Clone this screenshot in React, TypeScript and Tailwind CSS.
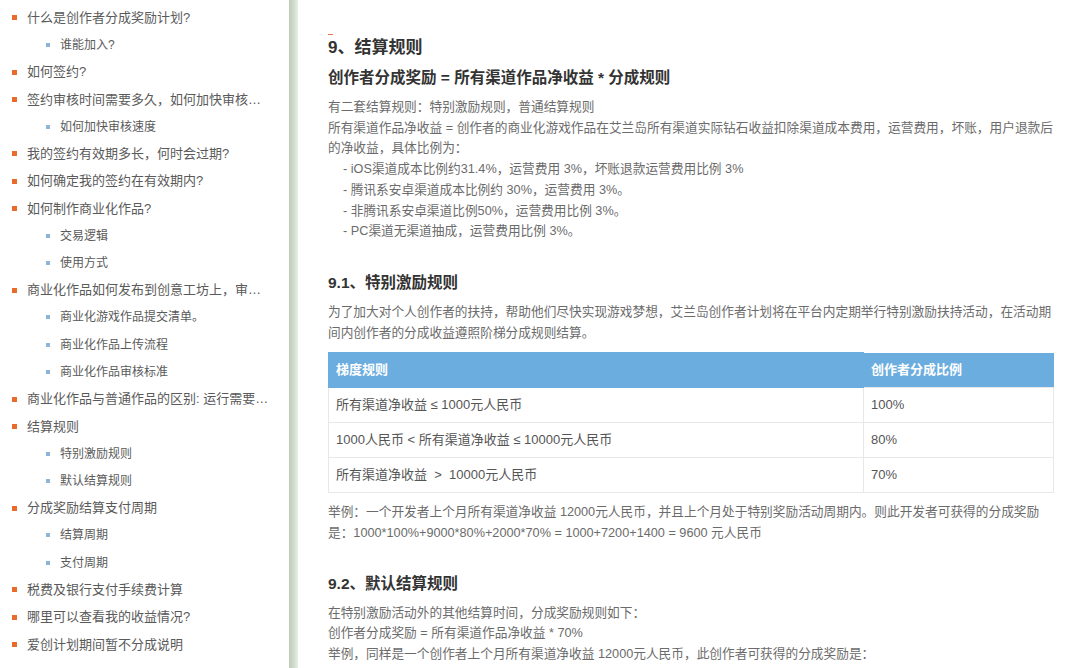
const font = { fontFamily: '"Liberation Sans", "Noto Sans CJK SC", sans-serif' };

type NavItem = { label: string; sub?: boolean };

const nav: NavItem[] = [
  { label: "什么是创作者分成奖励计划?" },
  { label: "谁能加入?", sub: true },
  { label: "如何签约?" },
  { label: "签约审核时间需要多久，如何加快审核速度?" },
  { label: "如何加快审核速度", sub: true },
  { label: "我的签约有效期多长，何时会过期?" },
  { label: "如何确定我的签约在有效期内?" },
  { label: "如何制作商业化作品?" },
  { label: "交易逻辑", sub: true },
  { label: "使用方式", sub: true },
  { label: "商业化作品如何发布到创意工坊上，审核需要多久?" },
  { label: "商业化游戏作品提交清单。", sub: true },
  { label: "商业化作品上传流程", sub: true },
  { label: "商业化作品审核标准", sub: true },
  { label: "商业化作品与普通作品的区别: 运行需要注意什么" },
  { label: "结算规则" },
  { label: "特别激励规则", sub: true },
  { label: "默认结算规则", sub: true },
  { label: "分成奖励结算支付周期" },
  { label: "结算周期", sub: true },
  { label: "支付周期", sub: true },
  { label: "税费及银行支付手续费计算" },
  { label: "哪里可以查看我的收益情况?" },
  { label: "爱创计划期间暂不分成说明" },
];

const tiers = [
  { rule: "所有渠道净收益 ≤ 1000元人民币", ratio: "100%" },
  { rule: "1000人民币 < 所有渠道净收益 ≤ 10000元人民币", ratio: "80%" },
  { rule: "所有渠道净收益  >  10000元人民币", ratio: "70%" },
];

function Sidebar() {
  return (
    <aside className="w-[289px] shrink-0 bg-white pt-[4px]">
      <ul>
        {nav.map((n) =>
          n.sub ? (
            <li key={n.label} className="flex items-center h-[27.25px] pl-[46px]">
              <span className="w-[4px] h-[4px] bg-[#8db3d5] shrink-0" />
              <span className="ml-[10px] text-[12px] text-[#5a5a5a]">{n.label}</span>
            </li>
          ) : (
            <li key={n.label} className="flex items-center h-[27.25px] pl-[12px]">
              <span className="w-[5px] h-[5px] bg-[#ea6a2c] shrink-0" />
              <span className="ml-[10px] w-[244px] truncate text-[13px] text-[#5a5a5a]">{n.label}</span>
            </li>
          )
        )}
      </ul>
    </aside>
  );
}

function Content() {
  return (
    <main className="flex-1 bg-white pl-[30px] pr-[26px] text-[12.7px] leading-[20.7px] text-[#6b6b6b]">
      <div className="mt-[34px] w-[5px] h-px bg-[#e8764a]" />
      <h2 className="text-[17px] leading-[26px] font-bold text-[#333]">9、结算规则</h2>
      <h3 className="mt-[4px] text-[15.5px] leading-[26px] font-bold text-[#333]">
        创作者分成奖励 = 所有渠道作品净收益 * 分成规则
      </h3>
      <div className="mt-[6px]">
        <p>有二套结算规则：特别激励规则，普通结算规则</p>
        <p>
          所有渠道作品净收益 = 创作者的商业化游戏作品在艾兰岛所有渠道实际钻石收益扣除渠道成本费用，运营费用，坏账，用户退款后的净收益，具体比例为：
        </p>
        <ul className="pl-[15px]">
          <li>- iOS渠道成本比例约31.4%，运营费用 3%，坏账退款运营费用比例 3%</li>
          <li>- 腾讯系安卓渠道成本比例约 30%，运营费用 3%。</li>
          <li>- 非腾讯系安卓渠道比例50%，运营费用比例 3%。</li>
          <li>- PC渠道无渠道抽成，运营费用比例 3%。</li>
        </ul>
      </div>

      <h3 className="mt-[29px] text-[15.5px] leading-[24px] font-bold text-[#333]">9.1、特别激励规则</h3>
      <p className="mt-[7px]">
        为了加大对个人创作者的扶持，帮助他们尽快实现游戏梦想，艾兰岛创作者计划将在平台内定期举行特别激励扶持活动，在活动期间内创作者的分成收益遵照阶梯分成规则结算。
      </p>
      <table className="mt-[9px] w-full border-collapse text-[13px] text-[#555]">
        <thead>
          <tr className="bg-[#6badde] text-white h-[35px]">
            <th className="w-[535px] text-left font-bold pl-[7px] border border-[#6badde]">梯度规则</th>
            <th className="text-left font-bold pl-[7px] border-l border-[#8cc0e6]">创作者分成比例</th>
          </tr>
        </thead>
        <tbody>
          {tiers.map((t) => (
            <tr key={t.ratio} className="h-[35px]">
              <td className="pl-[7px] border border-[#e8e8e8] whitespace-pre">{t.rule}</td>
              <td className="pl-[7px] border border-[#e8e8e8]">{t.ratio}</td>
            </tr>
          ))}
        </tbody>
      </table>
      <p className="mt-[9px]">
        举例：一个开发者上个月所有渠道净收益 12000元人民币，并且上个月处于特别奖励活动周期内。则此开发者可获得的分成奖励
        <br />
        是：1000*100%+9000*80%+2000*70% = 1000+7200+1400 = 9600 元人民币
      </p>

      <h3 className="mt-[28px] text-[15.5px] leading-[24px] font-bold text-[#333]">9.2、默认结算规则</h3>
      <div className="mt-[7px]">
        <p>在特别激励活动外的其他结算时间，分成奖励规则如下：</p>
        <p>创作者分成奖励 = 所有渠道作品净收益 * 70%</p>
        <p>举例，同样是一个创作者上个月所有渠道净收益 12000元人民币，此创作者可获得的分成奖励是：</p>
      </div>
    </main>
  );
}

export default function App() {
  return (
    <div className="flex h-[668px] w-[1080px] overflow-hidden bg-white" style={font}>
      <Sidebar />
      <div className="w-[9px] shrink-0 bg-gradient-to-r from-[#bccbb9] via-[#cfdacc] to-[#e9eee7]" />
      <Content />
    </div>
  );
}
